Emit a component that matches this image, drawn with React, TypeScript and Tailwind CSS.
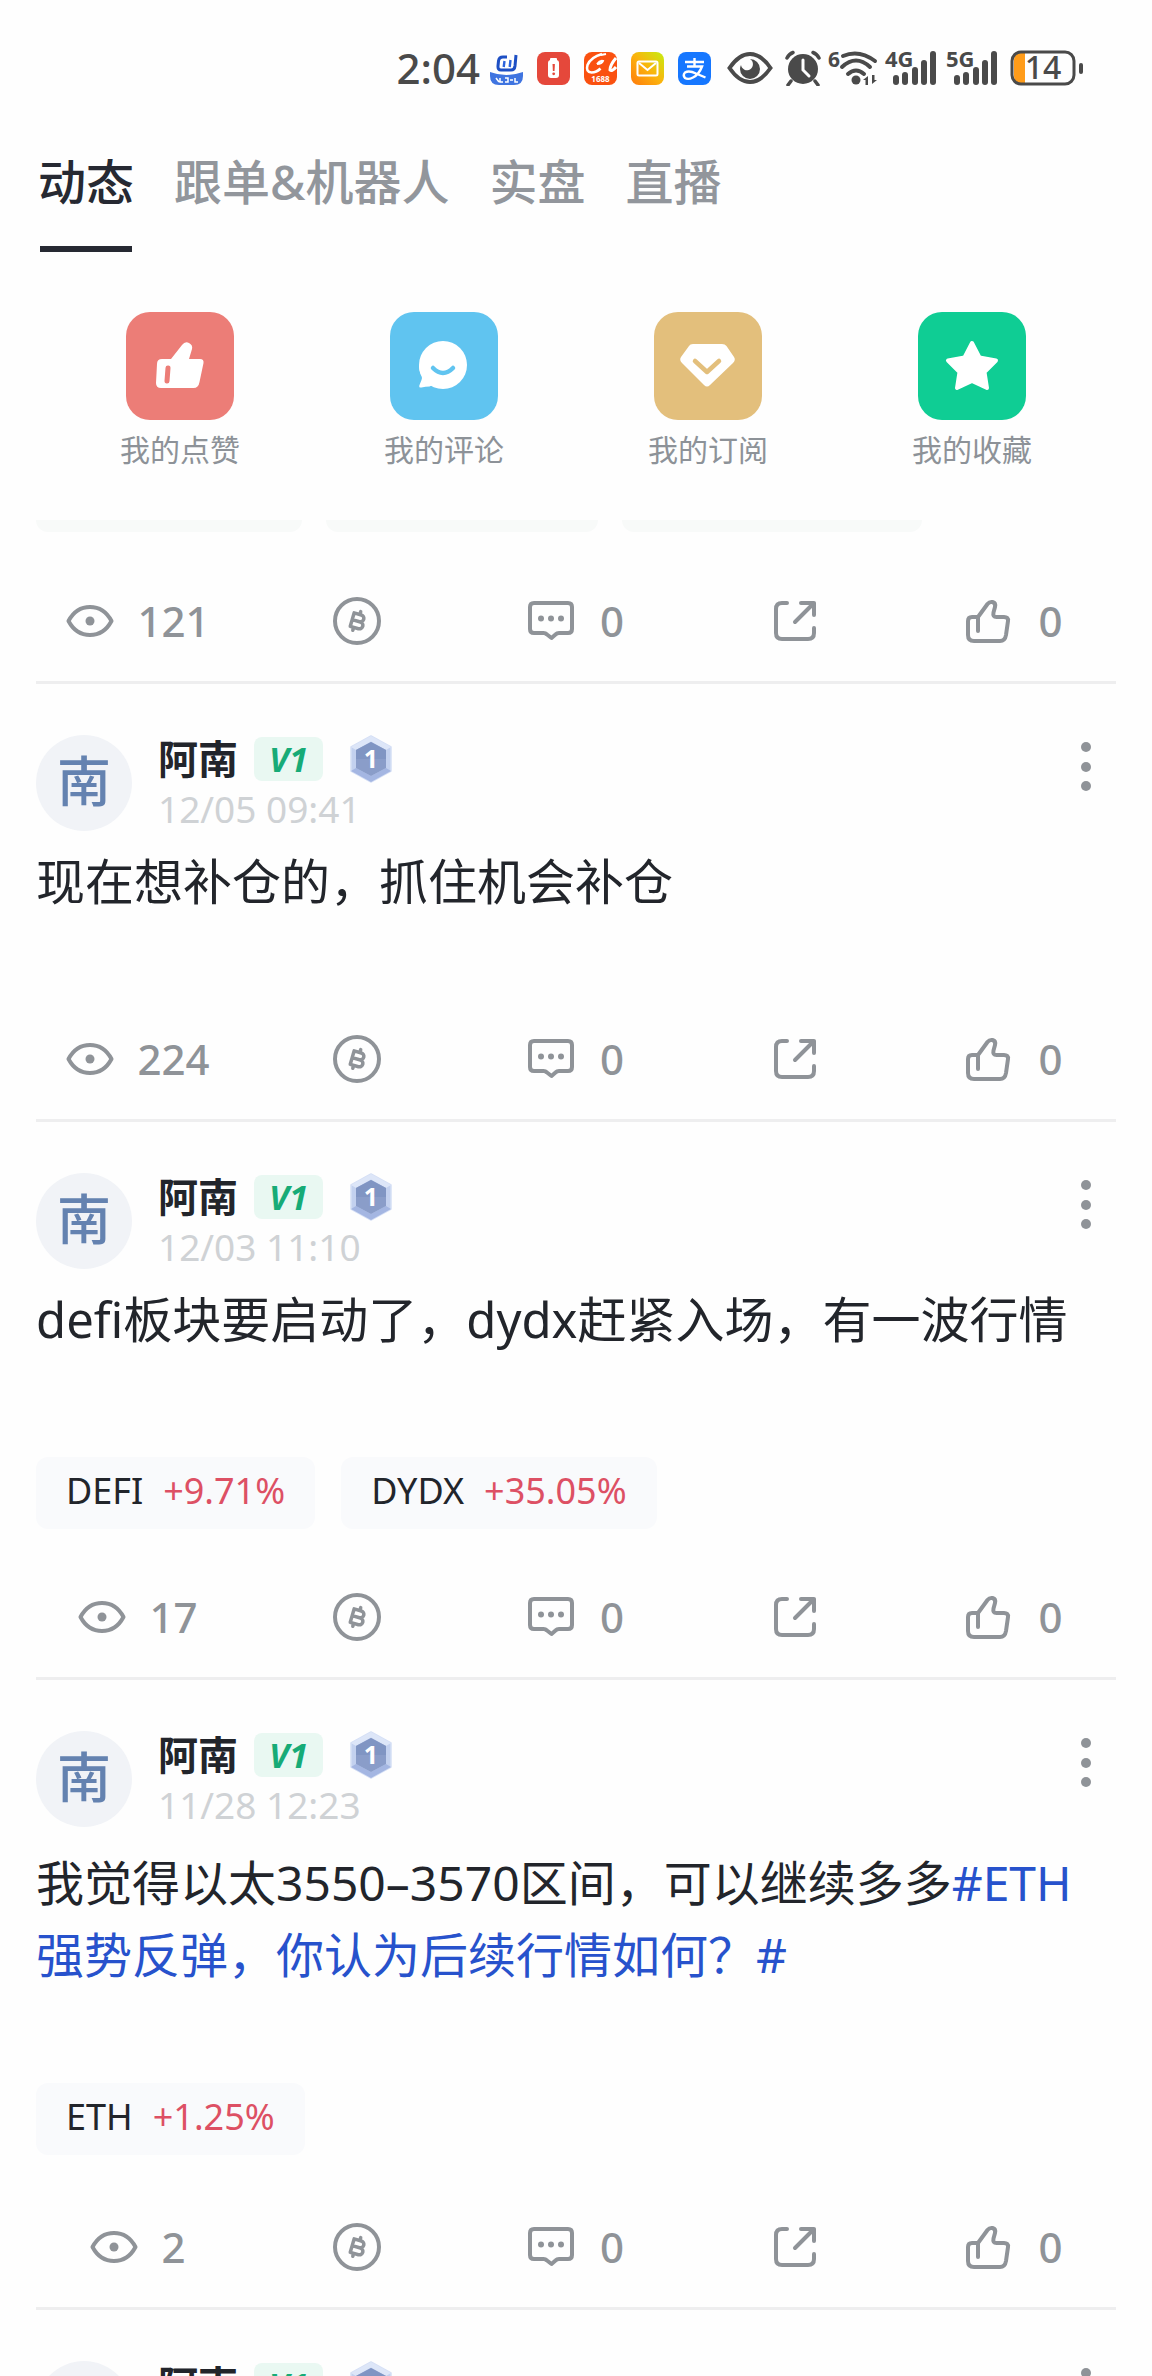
import type { ReactNode } from "react";

const tabs = ["动态", "跟单&机器人", "实盘", "直播"];

type Chip = { symbol: string; change: string };

type PostData = {
  date: string;
  views: number;
  body: string;
  topic?: string;
  chips?: Chip[];
};

const posts: PostData[] = [
  { date: "12/05 09:41", views: 224, body: "现在想补仓的，抓住机会补仓" },
  {
    date: "12/03 11:10",
    views: 17,
    body: "defi板块要启动了，dydx赶紧入场，有一波行情",
    chips: [
      { symbol: "DEFI", change: "+9.71%" },
      { symbol: "DYDX", change: "+35.05%" },
    ],
  },
  {
    date: "11/28 12:23",
    views: 2,
    body: "我觉得以太3550–3570区间，可以继续多多",
    topic: "#ETH强势反弹，你认为后续行情如何？#",
    chips: [{ symbol: "ETH", change: "+1.25%" }],
  },
  { date: "11/27 10:05", views: 12, body: "" },
];

/* ---------- status bar ---------- */

function SignalBars({ label }: { label: string }) {
  return (
    <svg className="overflow-visible" width="51" height="36" viewBox="0 0 51 36" fill="#4a4a4a" aria-hidden="true">
      <text x="-1" y="17" fontSize="22" fontWeight="700">{label}</text>
      <rect x="7" y="25" width="6" height="10" rx="3" />
      <rect x="16" y="22" width="6" height="13" rx="3" />
      <rect x="26" y="17" width="6" height="18" rx="3" />
      <rect x="35" y="10" width="6" height="25" rx="3" />
      <rect x="44" y="1" width="6" height="34" rx="3" />
    </svg>
  );
}

function AppBadges() {
  return (
    <div className="flex gap-3.5" aria-hidden="true">
      <svg width="33" height="33" viewBox="0 0 33 33">
        <path d="M0 20q16 6 33 0v4q0 9-9 9H9q-9 0-9-9z" fill="#3f74e0" />
        <path d="M17 5h-4q-4 0-4.500 4L8 14q-.3 4 3 4h10q3.500 0 4-4L26 3" fill="none" stroke="#1d4fc4" strokeWidth="3" />
        <path d="M14.500 9l-.8 6M20.500 8l-.8 7" stroke="#2b62dc" strokeWidth="2.400" />
        <path d="M6 26l3 4M10 26v4h3M15 26h3v4h-3M20 28h3M25 26v4h3" fill="none" stroke="#fff" strokeWidth="1.500" />
      </svg>
      <svg width="33" height="33" viewBox="0 0 33 33">
        <rect width="33" height="33" rx="8" fill="#e5483b" />
        <rect x="13" y="6" width="7" height="4" rx="1" fill="#fff" />
        <rect x="11" y="8" width="11" height="18" rx="3" fill="#fff" />
        <path d="M15.500 12h2.400l-.4 7h-1.600z" fill="#e5483b" />
        <circle cx="16.700" cy="21.800" r="1.400" fill="#e5483b" />
      </svg>
      <svg className="overflow-visible" width="33" height="33" viewBox="0 0 33 33">
        <rect width="33" height="33" rx="8" fill="#fa5110" />
        <path d="M18 2Q7 5 3.500 13q-2 7 4 7.500 5 0 9-4" fill="none" stroke="#fff" strokeWidth="2.600" />
        <path d="M13 12q5 0 6-3-3-1-6 3M17 3l5-1" fill="none" stroke="#fff" strokeWidth="2" />
        <path d="M32 6q-6 7-6 12 2 2 6-3" fill="none" stroke="#fff" strokeWidth="3" />
        <text x="16.500" y="30" textAnchor="middle" fontSize="8" fontWeight="700" fill="#fff">1688</text>
      </svg>
      <svg width="33" height="33" viewBox="0 0 33 33">
        <defs>
          <linearGradient id="mail" x1="0" y1="1" x2="1" y2="0">
            <stop offset="0" stopColor="#ff7a0c" />
            <stop offset=".5" stopColor="#fbb30d" />
            <stop offset="1" stopColor="#c5ee10" />
          </linearGradient>
        </defs>
        <rect width="33" height="33" rx="8" fill="url(#mail)" />
        <rect x="6.500" y="9.500" width="20" height="14" rx="1.500" fill="none" stroke="#fff" strokeWidth="2" />
        <path d="M8 11l8.500 7 8.500-7" fill="none" stroke="#fff" strokeWidth="2" />
      </svg>
      <svg width="33" height="33" viewBox="0 0 33 33">
        <rect width="33" height="33" rx="8" fill="#1677ff" />
        <path
          d="M7 10h19M16.500 6v9M9 14.500h15q-3 8-9 11-5 2.500-8 .5-2.500-3 0-5.500 4-2.500 11 1l9.500 4"
          fill="none"
          stroke="#fff"
          strokeWidth="2.400"
        />
      </svg>
    </div>
  );
}

function StatusBar() {
  return (
    <header className="flex h-[136px] shrink-0 items-center justify-end pr-[68px] text-[#4a4a4a]">
      <time className="mr-2.5 text-[42px] leading-none font-medium">2:04</time>
      <AppBadges />
      <svg className="ml-4" width="46" height="34" viewBox="0 0 46 34" aria-hidden="true">
        <path d="M2.500 17Q12 3 23 3t20.500 14Q34 31 23 31T2.500 17z" fill="none" stroke="#4a4a4a" strokeWidth="4" />
        <path d="M23 8a10 10 0 1 1-10 10q0-2 1-4a6 6 0 1 0 9-6z" fill="#4a4a4a" />
      </svg>
      <svg className="ml-3" width="36" height="36" viewBox="0 0 36 36" aria-hidden="true">
        <circle cx="18" cy="19" r="15" fill="#4a4a4a" />
        <path d="M18 10v10l6 6" fill="none" stroke="#fefefe" strokeWidth="3" strokeLinecap="round" />
        <path d="M2 8q2-4 6-5.500M28 2.500Q32 4 34 8M6 31l-3 4M30 31l3 4" stroke="#4a4a4a" strokeWidth="3.500" strokeLinecap="round" fill="none" />
      </svg>
      <svg className="ml-2 overflow-visible" width="49" height="38" viewBox="0 0 49 38" fill="#4a4a4a" aria-hidden="true">
        <text x="-1" y="18" fontSize="21" fontWeight="700">6</text>
        <g fill="none" stroke="#4a4a4a" strokeWidth="4" strokeLinecap="round">
          <path d="M14 7q16-7 32 5" />
          <path d="M13 18q14-13 28 0" />
          <path d="M19 25q8-7 16 0" />
        </g>
        <circle cx="27" cy="31" r="4.500" />
        <path d="M34 31l5-4v9h-2.500v-5zM48 31l-5 4v-9h2.500v5z" />
      </svg>
      <div className="ml-2 flex gap-2.5">
        <SignalBars label="4G" />
        <SignalBars label="5G" />
      </div>
      <svg className="ml-3 overflow-visible" width="74" height="36" viewBox="0 0 74 36" aria-label="14%">
        <path d="M15 3v30h-4q-7 0-7-7V10q0-7 7-7z" fill="#ff9c1a" />
        <rect x="2" y="2" width="62" height="32" rx="9" fill="none" stroke="#4a4a4a" strokeWidth="3" />
        <rect x="69" y="13" width="4" height="11" rx="2" fill="#4a4a4a" />
        <text x="33" y="29" textAnchor="middle" fontSize="32" fontWeight="500" fill="#4a4a4a">14</text>
      </svg>
    </header>
  );
}

/* ---------- shortcuts ---------- */

function Shortcut({ label, color, children }: { label: string; color: string; children: ReactNode }) {
  return (
    <a href="#" className="flex flex-col items-center">
      <span className={`flex size-[108px] items-center justify-center rounded-3xl ${color}`}>
        <svg width="60" height="60" viewBox="0 0 60 60" fill="#fff" aria-hidden="true">
          {children}
        </svg>
      </span>
      <span className="mt-2.5 text-[30px] leading-10 text-[#8d9298]">{label}</span>
    </a>
  );
}

function Shortcuts() {
  return (
    <section className="grid shrink-0 grid-cols-4 px-12 pt-15 pb-[50px]">
      <Shortcut label="我的点赞" color="bg-[#ec7d77]">
        <path d="M12 23h9l11-14q3-4 7-2 4 2 3 6l-3 10h11q4 0 3.500 4l-4 19q-1 6-6 6H11q-5 0-5-5l1-19q0-5 5-5z" />
        <path d="M18 32l-1 13" stroke="#ec7d77" strokeWidth="5" strokeLinecap="round" />
      </Shortcut>
      <Shortcut label="我的评论" color="bg-[#60c4f0]">
        <circle cx="29" cy="29" r="24" />
        <path d="M5 29q0 7 2.500 11 1 2 0 4l-2 5q-1 3 2 2.500 4-1 8-1l9-4z" />
        <path d="M19 32q10 10 20 0" fill="none" stroke="#60c4f0" strokeWidth="4.500" strokeLinecap="round" />
      </Shortcut>
      <Shortcut label="我的订阅" color="bg-[#e3bf7c]">
        <path d="M15 8h29q3 0 4.500 2L56 21q2 3-1 6L32 49q-3 3-6 0L4 27q-3-3-1-6l8-11q1-2 4-2z" />
        <path d="M17 25l12 11 12-11" fill="none" stroke="#e3bf7c" strokeWidth="4.500" strokeLinecap="round" strokeLinejoin="round" />
      </Shortcut>
      <Shortcut label="我的收藏" color="bg-[#0fcd94]">
        <path
          d="M30 7l7.500 14.500L54 24.500 42.500 36 45 52l-15-7-15 7 2.500-16L6 24.500l16.500-3z"
          stroke="#fff"
          strokeWidth="4"
          strokeLinejoin="round"
        />
      </Shortcut>
    </section>
  );
}

/* ---------- feed ---------- */

function Icon({ children }: { children: ReactNode }) {
  return (
    <svg
      width="48"
      height="48"
      viewBox="0 0 48 48"
      fill="none"
      stroke="currentColor"
      strokeWidth="4"
      strokeLinecap="round"
      strokeLinejoin="round"
      aria-hidden="true"
    >
      {children}
    </svg>
  );
}

function Actions({ views }: { views: number }) {
  const cell = "flex items-center justify-center gap-6";
  return (
    <div className="-mx-2 grid h-12 grid-cols-5 text-[42px] leading-none font-medium text-[#8f9398]">
      <span className={cell}>
        <Icon>
          <path d="M2.500 24Q10 10 24 10t21.500 14Q38 38 24 38T2.500 24z" />
          <circle cx="24" cy="24" r="4.500" fill="currentColor" stroke="none" />
        </Icon>
        {views}
      </span>
      <button type="button" aria-label="打赏" className={cell}>
        <Icon>
          <circle cx="24" cy="24" r="22" />
          <g transform="rotate(16 24 24)">
            <path d="M19 17h7.500a3.500 3.500 0 0 1 0 7H19zM19 24h8.500a3.500 3.500 0 0 1 0 7H19z" strokeWidth="3.500" />
            <path d="M25 14v2M22.500 32v2" strokeWidth="3.500" />
          </g>
        </Icon>
      </button>
      <button type="button" aria-label="评论" className={cell}>
        <Icon>
          <path d="M6 6h34q4 0 4 4v22q0 4-4 4H31q-2 0-3.500 1.500L23.500 41 19 37.500Q17.500 36 15.500 36H6q-4 0-4-4V10q0-4 4-4z" />
          <g fill="currentColor" stroke="none">
            <circle cx="13" cy="21.500" r="3" />
            <circle cx="23" cy="21.500" r="3" />
            <circle cx="33" cy="21.500" r="3" />
          </g>
        </Icon>
        0
      </button>
      <button type="button" aria-label="分享" className={cell}>
        <Icon>
          <path d="M16 6h-5q-6 0-6 6v24q0 6 6 6h26q6 0 6-6v-5M30 6h13v12M43 6L24 25" />
        </Icon>
      </button>
      <button type="button" aria-label="点赞" className={cell}>
        <Icon>
          <path d="M12 20L21.500 7q2-2.500 5-2 3.500 1 2.500 5l-1.500 5.500q-1 4.500 3 4.500H38q4.500 0 4 4l-2 14q-1 6-6 6H8q-6 0-6-6V24q0-4 4-4z" />
          <path d="M12 20v14" />
        </Icon>
        0
      </button>
    </div>
  );
}

function HexBadge() {
  return (
    <svg className="overflow-visible" width="44" height="48" viewBox="0 0 44 48" role="img" aria-label="1">
      <path d="M22 1l20 11v24L22 47 2 36V12z" fill="#c3d1ef" stroke="#d5dff5" strokeWidth="1.500" strokeLinejoin="round" />
      <path d="M22 1l20 11-5 3-15-8.500L7 15l-5-3z" fill="#dde6f8" />
      <path d="M22 47l20-11-5-3-15 8-15-8-5 3z" fill="#a4b6e2" />
      <path d="M22 7l15 8v18l-15 8-15-8V15z" fill="#8a9dc9" />
      <path d="M22 7l15 8v9H7v-9z" fill="#7a8fc0" opacity=".6" />
      <text x="22" y="33" textAnchor="middle" fontSize="25" fontWeight="700" fill="#fff">1</text>
    </svg>
  );
}

function PostHeader({ date }: { date: string }) {
  return (
    <div className="flex h-24">
      <div className="flex size-24 items-center justify-center rounded-full bg-[#f1f3f7] pb-1 text-[54px] leading-none font-medium text-[#6482b0]">
        南
      </div>
      <div className="ml-[26px]">
        <div className="flex h-12 items-center">
          <span className="text-[40px] leading-12 font-semibold text-[#22252b]">阿南</span>
          <span className="ml-4 flex h-11 w-[69px] items-center justify-center rounded-lg bg-[#e9f8f2] text-[34px] leading-none font-bold text-[#17ab77] italic">
            V1
          </span>
          <span className="ml-[26px]">
            <HexBadge />
          </span>
        </div>
        <div className="text-[37px] leading-[52px] text-[#cfd2d5]">{date}</div>
      </div>
      <button type="button" aria-label="更多" className="mt-1 mr-6 ml-auto self-start">
        <svg width="12" height="54" viewBox="0 0 12 54" fill="#8f9398" aria-hidden="true">
          <circle cx="6" cy="8" r="5" />
          <circle cx="6" cy="28" r="5" />
          <circle cx="6" cy="47" r="5" />
        </svg>
      </button>
    </div>
  );
}

function Post({ post }: { post: PostData }) {
  const { date, views, body, topic, chips } = post;
  return (
    <article className="border-b-3 border-[#eeeeef] pt-[51px] pb-9">
      <PostHeader date={date} />
      <p
        className={
          topic
            ? "mt-5 mb-[92px] pr-8 text-[48px] leading-[72px] text-[#22252b]"
            : "mt-3.5 mb-[102px] text-[49px] leading-[72px] text-[#22252b]"
        }
      >
        {body}
        {topic && (
          <a href="#" className="text-[#2752cc]">
            {topic}
          </a>
        )}
      </p>
      {chips ? (
        <div className={topic ? "mb-[68px] flex gap-[26px]" : "mb-16 flex gap-[26px]"}>
          {chips.map((c) => (
            <a
              key={c.symbol}
              href="#"
              className="flex h-[72px] items-center gap-5 rounded-xl bg-[#f9fafc] px-[30px] pb-1 text-4xl leading-none text-[#22252b]"
            >
              {c.symbol}
              <span className="text-[#dd5064]">{c.change}</span>
            </a>
          ))}
        </div>
      ) : (
        <div className="h-4" />
      )}
      <Actions views={views} />
    </article>
  );
}

export default function App() {
  return (
    <div className="flex h-screen flex-col overflow-hidden bg-[#fefefe] font-['Noto_Sans','Noto_Sans_CJK_SC',sans-serif]">
      <StatusBar />
      <nav className="flex shrink-0 gap-10 pt-2.5 pr-9 pl-[38px]">
        {tabs.map((tab, i) => (
          <button
            key={tab}
            type="button"
            className={
              i === 0
                ? "flex flex-col items-center text-[48px] leading-[72px] font-medium text-[#262932]"
                : "flex flex-col items-center text-[48px] leading-[72px] font-medium text-[#92969c]"
            }
          >
            {tab}
            {i === 0 && <span className="mt-7 h-1.5 w-[92px] bg-[#262932]" />}
          </button>
        ))}
      </nav>
      <Shortcuts />
      <main className="min-h-0 flex-1 overflow-hidden px-9">
        {/* tail of the post scrolled under the shortcuts */}
        <article className="border-b-3 border-[#eeeeef] pb-9">
          <div className="mb-[65px] flex gap-6">
            <div className="h-3 w-[266px] rounded-b-xl bg-[#f8faf9]" />
            <div className="h-3 w-[272px] rounded-b-xl bg-[#f8faf9]" />
            <div className="h-3 w-[300px] rounded-b-xl bg-[#f8faf9]" />
          </div>
          <Actions views={121} />
        </article>
        {posts.map((post) => (
          <Post key={post.date} post={post} />
        ))}
      </main>
    </div>
  );
}
